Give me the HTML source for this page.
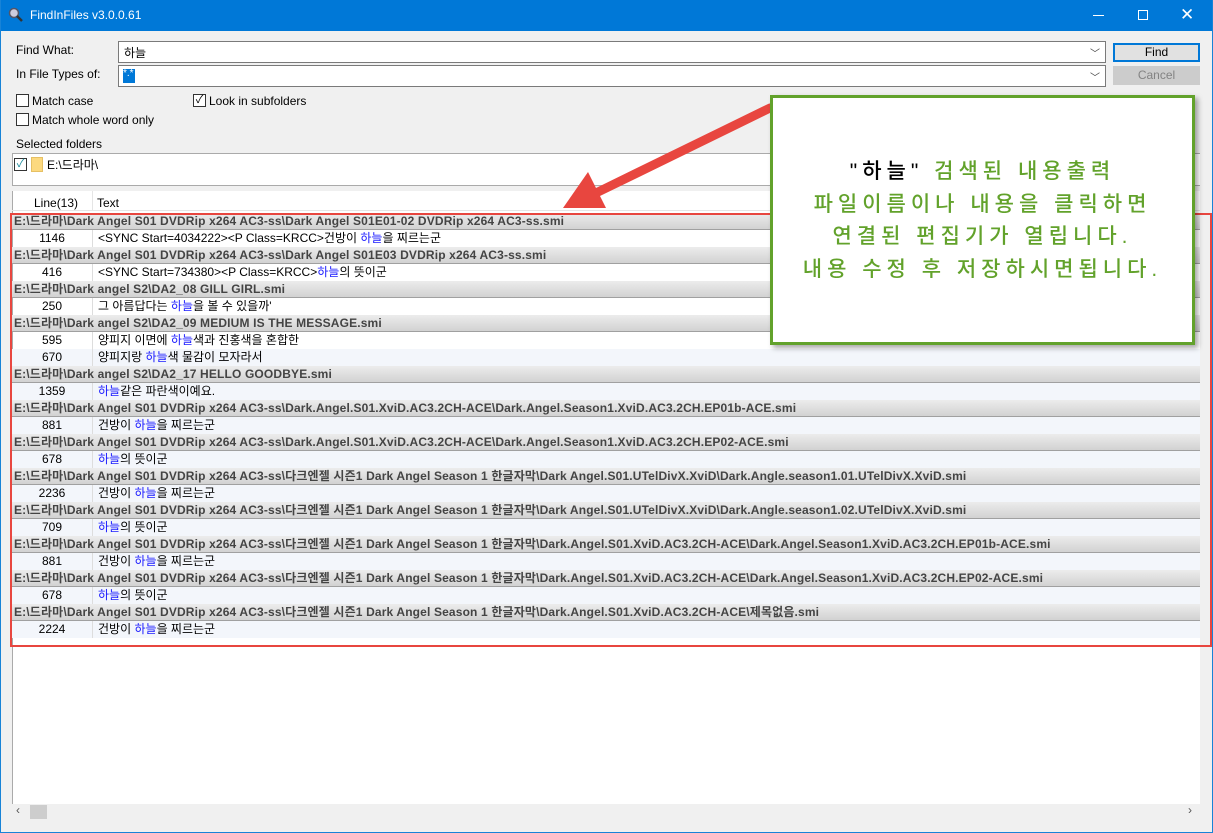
<!DOCTYPE html>
<html><head><meta charset="utf-8"><style>
*{box-sizing:border-box;margin:0;padding:0}
body{width:1213px;height:833px;overflow:hidden;background:#f0f0f0;font-family:"Liberation Sans","Noto Sans CJK KR",sans-serif;font-size:12px;color:#000;position:relative}
.abs{position:absolute}
.title{left:0;top:0;width:1213px;height:31px;background:#0078d7;color:#fff;font-size:12px}
.win{left:0;top:0;width:1213px;height:833px;border:1px solid #1883d7;border-top:none;pointer-events:none}
.combo{background:#fff;border:1px solid #7a7a7a;height:22px}
.cb{width:13px;height:13px;border:1px solid #333;background:#fff}
.row{position:absolute;left:12px;width:1188px;height:17px;line-height:17px;white-space:nowrap;overflow:hidden}
.g{background:linear-gradient(#ececec,#d2d2d2);border-bottom:1px solid #a0a0a0;font-weight:bold;color:#444;padding-left:2px;font-size:12px;letter-spacing:0.15px}
.d .n{position:absolute;left:0;width:80px;text-align:center}
.d .t{position:absolute;left:80px;padding-left:5px;border-left:1px solid #ddd;height:17px}
.b{color:#1a1aff}
.alt{background:#f3f6fb}
</style></head><body>
<div class="abs title">
 <svg class="abs" style="left:8px;top:7px" width="16" height="16"><circle cx="6" cy="6" r="4.5" fill="#ccd" stroke="#556" stroke-width="1.5"/><line x1="9" y1="9" x2="14" y2="14" stroke="#333" stroke-width="2.5"/></svg>
 <span class="abs" style="left:30px;top:8px">FindInFiles v3.0.0.61</span>
 <div class="abs" style="left:1093px;top:15px;width:11px;height:1px;background:#fff"></div>
 <div class="abs" style="left:1138px;top:10px;width:10px;height:10px;border:1px solid #fff"></div>
 <span class="abs" style="left:1180px;top:5px;font-size:17px">✕</span>
</div>
<span class="abs" style="left:16px;top:43px">Find What:</span>
<span class="abs" style="left:16px;top:67px">In File Types of:</span>
<div class="abs combo" style="left:118px;top:41px;width:988px"><span class="abs" style="left:5px;top:2px">하늘</span><span class="abs" style="right:5px;top:3px;color:#444;font-size:10px">﹀</span></div>
<div class="abs combo" style="left:118px;top:65px;width:988px"><span class="abs" style="left:4px;top:3px;width:12px;height:14px;background:#0078d7;color:#fff;font-size:10px;line-height:10px">*.*</span><span class="abs" style="right:5px;top:3px;color:#444;font-size:10px">﹀</span></div>
<div class="abs" style="left:1113px;top:43px;width:87px;height:19px;border:2px solid #0078d7;background:#e1e1e1;text-align:center;line-height:15px">Find</div>
<div class="abs" style="left:1113px;top:66px;width:87px;height:19px;border:1px solid #ccc;background:#ccc;color:#838383;text-align:center;line-height:17px">Cancel</div>
<div class="abs cb" style="left:16px;top:94px"></div><span class="abs" style="left:32px;top:94px">Match case</span>
<div class="abs cb" style="left:16px;top:113px"></div><span class="abs" style="left:32px;top:113px">Match whole word only</span>
<div class="abs cb" style="left:193px;top:94px;font-size:11px;line-height:10px;text-align:center">✓</div><span class="abs" style="left:209px;top:94px">Look in subfolders</span>
<span class="abs" style="left:16px;top:137px">Selected folders</span>
<div class="abs" style="left:12px;top:153px;width:1188px;height:33px;background:#fff;border:1px solid #aaa;border-right:none"></div>
<div class="abs cb" style="left:14px;top:158px;color:#1a8a9a;font-size:11px;line-height:10px;text-align:center">✓</div>
<div class="abs" style="left:31px;top:157px;width:12px;height:15px;background:#fcd97f;border:1px solid #e6c064"></div>
<span class="abs" style="left:47px;top:156px">E:\드라마\</span>
<div class="abs" style="left:12px;top:191px;width:1188px;height:629px;background:#fff;border-left:1px solid #aaa"></div>
<div class="abs" style="left:12px;top:191px;width:1188px;height:20px;border-bottom:1px solid #e5e5e5"></div>
<div class="abs" style="left:92px;top:191px;width:1px;height:20px;background:#e5e5e5"></div>
<span class="abs" style="left:34px;top:196px">Line(13)</span><span class="abs" style="left:97px;top:196px">Text</span>
<div class="abs" style="left:12px;top:804px;width:1188px;height:16px;background:#f0f0f0"></div>
<div class="abs" style="left:30px;top:805px;width:17px;height:14px;background:#cdcdcd"></div>
<span class="abs" style="left:16px;top:803px;color:#555">‹</span><span class="abs" style="left:1188px;top:803px;color:#555">›</span>

<div class="row g" style="top:213px">E:\드라마\Dark Angel S01 DVDRip x264 AC3-ss\Dark Angel S01E01-02 DVDRip x264 AC3-ss.smi</div>
<div class="row d" style="top:230px"><span class="n">1146</span><span class="t">&lt;SYNC Start=4034222&gt;&lt;P Class=KRCC&gt;건방이 <span class="b">하늘</span>을 찌르는군</span></div>
<div class="row g" style="top:247px">E:\드라마\Dark Angel S01 DVDRip x264 AC3-ss\Dark Angel S01E03 DVDRip x264 AC3-ss.smi</div>
<div class="row d" style="top:264px"><span class="n">416</span><span class="t">&lt;SYNC Start=734380&gt;&lt;P Class=KRCC&gt;<span class="b">하늘</span>의 뜻이군</span></div>
<div class="row g" style="top:281px">E:\드라마\Dark angel S2\DA2_08 GILL GIRL.smi</div>
<div class="row d" style="top:298px"><span class="n">250</span><span class="t">그 아름답다는 <span class="b">하늘</span>을 볼 수 있을까'</span></div>
<div class="row g" style="top:315px">E:\드라마\Dark angel S2\DA2_09 MEDIUM IS THE MESSAGE.smi</div>
<div class="row d" style="top:332px"><span class="n">595</span><span class="t">양피지 이면에 <span class="b">하늘</span>색과 진홍색을 혼합한</span></div>
<div class="row d alt" style="top:349px"><span class="n">670</span><span class="t">양피지랑 <span class="b">하늘</span>색 물감이 모자라서</span></div>
<div class="row g" style="top:366px">E:\드라마\Dark angel S2\DA2_17 HELLO GOODBYE.smi</div>
<div class="row d alt" style="top:383px"><span class="n">1359</span><span class="t"><span class="b">하늘</span>같은 파란색이예요.</span></div>
<div class="row g" style="top:400px">E:\드라마\Dark Angel S01 DVDRip x264 AC3-ss\Dark.Angel.S01.XviD.AC3.2CH-ACE\Dark.Angel.Season1.XviD.AC3.2CH.EP01b-ACE.smi</div>
<div class="row d alt" style="top:417px"><span class="n">881</span><span class="t">건방이 <span class="b">하늘</span>을 찌르는군</span></div>
<div class="row g" style="top:434px">E:\드라마\Dark Angel S01 DVDRip x264 AC3-ss\Dark.Angel.S01.XviD.AC3.2CH-ACE\Dark.Angel.Season1.XviD.AC3.2CH.EP02-ACE.smi</div>
<div class="row d alt" style="top:451px"><span class="n">678</span><span class="t"><span class="b">하늘</span>의 뜻이군</span></div>
<div class="row g" style="top:468px">E:\드라마\Dark Angel S01 DVDRip x264 AC3-ss\다크엔젤 시즌1 Dark Angel  Season 1 한글자막\Dark Angel.S01.UTelDivX.XviD\Dark.Angle.season1.01.UTelDivX.XviD.smi</div>
<div class="row d alt" style="top:485px"><span class="n">2236</span><span class="t">건방이 <span class="b">하늘</span>을 찌르는군</span></div>
<div class="row g" style="top:502px">E:\드라마\Dark Angel S01 DVDRip x264 AC3-ss\다크엔젤 시즌1 Dark Angel  Season 1 한글자막\Dark Angel.S01.UTelDivX.XviD\Dark.Angle.season1.02.UTelDivX.XviD.smi</div>
<div class="row d alt" style="top:519px"><span class="n">709</span><span class="t"><span class="b">하늘</span>의 뜻이군</span></div>
<div class="row g" style="top:536px">E:\드라마\Dark Angel S01 DVDRip x264 AC3-ss\다크엔젤 시즌1 Dark Angel  Season 1 한글자막\Dark.Angel.S01.XviD.AC3.2CH-ACE\Dark.Angel.Season1.XviD.AC3.2CH.EP01b-ACE.smi</div>
<div class="row d alt" style="top:553px"><span class="n">881</span><span class="t">건방이 <span class="b">하늘</span>을 찌르는군</span></div>
<div class="row g" style="top:570px">E:\드라마\Dark Angel S01 DVDRip x264 AC3-ss\다크엔젤 시즌1 Dark Angel  Season 1 한글자막\Dark.Angel.S01.XviD.AC3.2CH-ACE\Dark.Angel.Season1.XviD.AC3.2CH.EP02-ACE.smi</div>
<div class="row d alt" style="top:587px"><span class="n">678</span><span class="t"><span class="b">하늘</span>의 뜻이군</span></div>
<div class="row g" style="top:604px">E:\드라마\Dark Angel S01 DVDRip x264 AC3-ss\다크엔젤 시즌1 Dark Angel  Season 1 한글자막\Dark.Angel.S01.XviD.AC3.2CH-ACE\제목없음.smi</div>
<div class="row d alt" style="top:621px"><span class="n">2224</span><span class="t">건방이 <span class="b">하늘</span>을 찌르는군</span></div>

<div class="abs" style="left:10px;top:213px;width:1202px;height:434px;border:2px solid #e8463f"></div>
<svg class="abs" style="left:0;top:0" width="1213" height="833">
 <line x1="770" y1="108" x2="598" y2="192" stroke="#e8463f" stroke-width="9" stroke-linecap="round"/>
 <polygon points="563,208 588,172 606,208" fill="#e8463f"/>
</svg>
<div class="abs" style="left:770px;top:95px;width:425px;height:250px;background:#fff;border:3px solid #62a22b;box-shadow:3px 3px 5px rgba(0,0,0,.35);text-align:center;font-family:'Liberation Sans','Noto Sans CJK KR',sans-serif;font-size:21px;font-weight:500;letter-spacing:5px;line-height:32.5px;color:#62a22b;padding-top:58px">
<span style="color:#000">"하늘"</span> 검색된 내용출력<br>파일이름이나 내용을 클릭하면<br>연결된 편집기가 열립니다.<br>내용 수정 후 저장하시면됩니다.
</div>
<div class="abs win"></div>
</body></html>
